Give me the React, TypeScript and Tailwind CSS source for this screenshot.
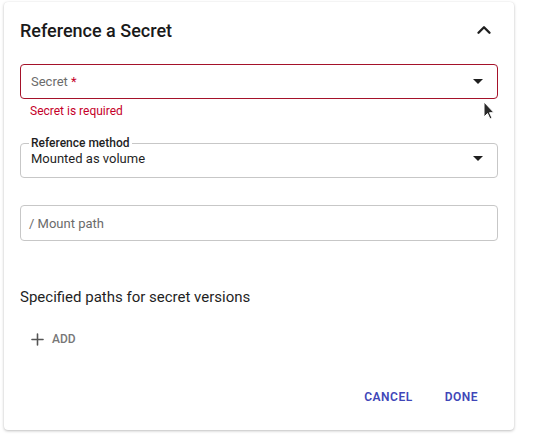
import { ChevronUp, Plus } from "lucide-react";

const font = { fontFamily: "Roboto, 'Liberation Sans', sans-serif" };

function Caret() {
  return (
    <svg width="10" height="5" viewBox="0 0 10 5" className="shrink-0">
      <path d="M0 0h10L5 5z" fill="#1f1f1f" />
    </svg>
  );
}

export default function App() {
  return (
    <div className="relative min-h-[437px] bg-white pl-[4px] pt-[2px]" style={font}>
      <div className="flex h-[428px] w-[510px] flex-col rounded-[4px] bg-white px-4 shadow-[0_1px_3px_rgba(0,0,0,0.25),0_0_1px_rgba(0,0,0,0.08)]">
        <div className="flex h-[56px] items-center justify-between">
          <h2 className="text-[18px] font-medium text-[#1a1a1a]">Reference a Secret</h2>
          <ChevronUp size={22} strokeWidth={2.6} className="mr-[3px] text-[#1f1f1f]" />
        </div>

        <div className="mt-[6px] flex h-[35px] items-center justify-between rounded-[4px] border border-[#a5122a] pl-[10px] pr-[14px]">
          <span className="text-[13px] text-[#6b6b6b]">
            Secret <span className="text-[#c5002a]">*</span>
          </span>
          <Caret />
        </div>
        <p className="mt-[3px] pl-[10px] text-[12px] text-[#c5002a]">Secret is required</p>

        <fieldset className="mt-[17px] flex h-[41px] items-center justify-between rounded-[4px] border border-[#c7c7c7] pb-[2px] pl-[10px] pr-[14px]">
          <legend className="-ml-[2px] px-[2px] text-[12px] font-medium leading-[12px] text-[#1f1f1f]">Reference method</legend>
          <span className="text-[13px] text-[#1f1f1f]">Mounted as volume</span>
          <Caret />
        </fieldset>

        <div className="mt-[27px] flex h-[36px] items-center rounded-[4px] border border-[#c7c7c7] pl-[8px] pt-[2px]">
          <span className="text-[13px] text-[#6b6b6b]">/ Mount path</span>
        </div>

        <p className="mt-[45px] text-[15px] text-[#1f1f1f]">Specified paths for secret versions</p>

        <button className="mt-[21px] flex w-fit items-center gap-[5px] pl-[8px] text-[12px] font-medium text-[#777]">
          <Plus size={19} strokeWidth={2} className="text-[#555]" /> ADD
        </button>

        <div className="mt-auto mb-[24px] flex justify-end gap-[32px] pr-[20px] text-[12px] font-semibold tracking-[0.5px] text-[#4046b8]">
          <button>CANCEL</button>
          <button>DONE</button>
        </div>
      </div>

      <svg width="12" height="19" viewBox="0 0 12 19" className="absolute left-[483px] top-[101px]">
        <path d="M1 1v15l3.5-3.5 2.5 5.5 2-1-2.5-5.3H11z" fill="#2a2a2a" stroke="#fff" strokeWidth="1" />
      </svg>
    </div>
  );
}
